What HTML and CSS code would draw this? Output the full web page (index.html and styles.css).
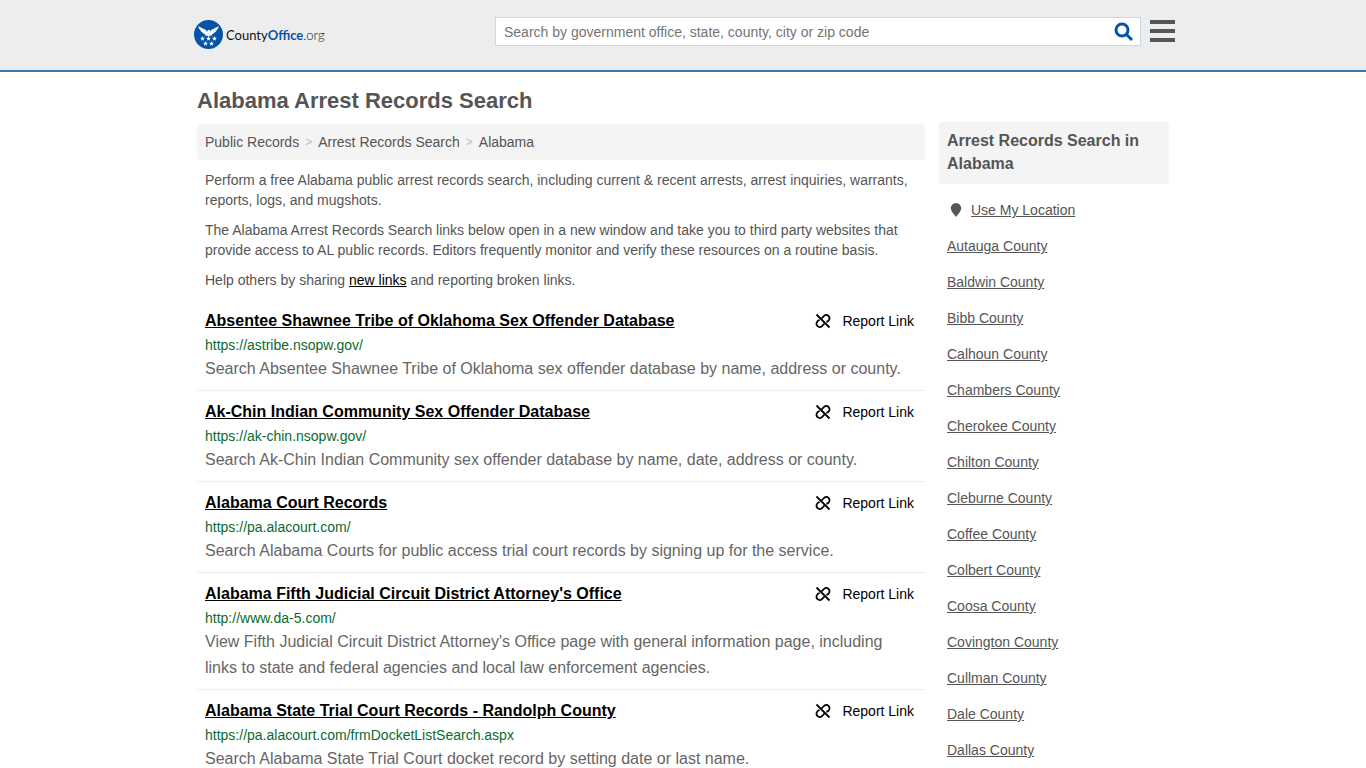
FILE: index.html
```html
<!DOCTYPE html>
<html lang="en">
<head>
    <meta charset="UTF-8">
    <meta name="viewport" content="width=device-width, initial-scale=1.0">
    <title>Alabama Arrest Records Search</title>
    <link rel="stylesheet" href="styles.css">
</head>
<body>
    <!-- shared icons -->
    <svg class="sprite" aria-hidden="true">
        <symbol id="unlink" viewBox="0 0 16 16">
            <g fill="none" stroke="currentColor" stroke-width="1.8">
                <path d="M1.500 1.500l13 13"/>
                <path d="M6.500 5.500l2.300-2.400a3.200 3.200 0 0 1 4.900 4.400c-.6.900-1.400 1.200-2.400 1.300"/>
                <path d="M9.500 10.500l-2.300 2.400a3.200 3.200 0 0 1-4.900-4.400c.6-.9 1.400-1.200 2.400-1.300"/>
            </g>
        </symbol>
        <symbol id="star" viewBox="0 0 10 10">
            <path fill="#fff" d="M5 0l1.300 3.500 3.700.1-2.900 2.300 1 3.600L5 7.400 1.900 9.500l1-3.600L0 3.600l3.700-.1z"/>
        </symbol>
    </svg>

    <header class="header">
        <div class="header-inner">
            <a class="logo" href="#" aria-label="CountyOffice.org">
                <svg class="logo-mark" viewBox="0 0 29 29">
                    <circle cx="14.5" cy="14.5" r="14.5" fill="#0654a6"/>
                    <path fill="#fff" d="M4.500 6c1.200 1.500 4.500 2.200 6.500 3.600 1.100.8 1.600 1.700 2.200 2.400l.3-1.800 1.700-.4 1 .8-.4 1.400c.6-.7 1.100-1.600 2.200-2.400 2-1.400 5.300-2.100 6.500-3.600.2 2-.8 3.200-1.700 3.800-.4 1.500-1.300 2.200-2.300 2.600-.8 1.200-1.800 1.600-3 1.700l1.200 1.500-2.500-.2-1.700 1-1.700-1-2.500.2 1.200-1.500c-1.200-.1-2.200-.5-3-1.700-1-.4-1.900-1.100-2.300-2.600C5.300 9.200 4.300 8 4.500 6z"/>
                    <use href="#star" x="6" y="16" width="5" height="5"/>
                    <use href="#star" x="12" y="16" width="5" height="5"/>
                    <use href="#star" x="18" y="16" width="5" height="5"/>
                    <use href="#star" x="9" y="21" width="5" height="5"/>
                    <use href="#star" x="15" y="21" width="5" height="5"/>
                </svg>
                <span class="logo-text">County<b>Office</b><span class="logo-org">.org</span></span>
            </a>
            <form class="search">
                <input class="search-input" type="text" aria-label="Search" placeholder="Search by government office, state, county, city or zip code">
                <button class="search-button" type="button" aria-label="Search">
                    <svg width="20" height="20" viewBox="0 0 20 20" fill="none" stroke="#0654a6" stroke-width="3">
                        <circle cx="8" cy="8" r="6"/>
                        <path d="M12.500 12.500l5.500 5.500"/>
                    </svg>
                </button>
            </form>
            <button class="menu-button" type="button" aria-label="Menu">
                <span></span>
                <span></span>
                <span></span>
            </button>
        </div>
    </header>

    <div class="container">
        <main class="main">
            <h1>Alabama Arrest Records Search</h1>
            <nav class="breadcrumb">
                <a href="#">Public Records</a>
                <span>&gt;</span>
                <a href="#">Arrest Records Search</a>
                <span>&gt;</span>
                <a href="#">Alabama</a>
            </nav>
            <div class="intro">
                <p>Perform a free Alabama public arrest records search, including current &amp; recent arrests, arrest inquiries, warrants, reports, logs, and mugshots.</p>
                <p>The Alabama Arrest Records Search links below open in a new window and take you to third party websites that provide access to AL public records. Editors frequently monitor and verify these resources on a routine basis.</p>
                <p>Help others by sharing <a href="#">new links</a> and reporting broken links.</p>
            </div>

            <div class="record">
                <div class="record-top">
                    <a class="record-title" href="#">Absentee Shawnee Tribe of Oklahoma Sex Offender Database</a>
                    <a class="report" href="#"><svg><use href="#unlink"/></svg>Report Link</a>
                </div>
                <div class="record-url">https://astribe.nsopw.gov/</div>
                <p class="record-text">Search Absentee Shawnee Tribe of Oklahoma sex offender database by name, address or county.</p>
            </div>
            <div class="record">
                <div class="record-top">
                    <a class="record-title" href="#">Ak-Chin Indian Community Sex Offender Database</a>
                    <a class="report" href="#"><svg><use href="#unlink"/></svg>Report Link</a>
                </div>
                <div class="record-url">https://ak-chin.nsopw.gov/</div>
                <p class="record-text">Search Ak-Chin Indian Community sex offender database by name, date, address or county.</p>
            </div>
            <div class="record">
                <div class="record-top">
                    <a class="record-title" href="#">Alabama Court Records</a>
                    <a class="report" href="#"><svg><use href="#unlink"/></svg>Report Link</a>
                </div>
                <div class="record-url">https://pa.alacourt.com/</div>
                <p class="record-text">Search Alabama Courts for public access trial court records by signing up for the service.</p>
            </div>
            <div class="record">
                <div class="record-top">
                    <a class="record-title" href="#">Alabama Fifth Judicial Circuit District Attorney's Office</a>
                    <a class="report" href="#"><svg><use href="#unlink"/></svg>Report Link</a>
                </div>
                <div class="record-url">http://www.da-5.com/</div>
                <p class="record-text">View Fifth Judicial Circuit District Attorney's Office page with general information page, including links to state and federal agencies and local law enforcement agencies.</p>
            </div>
            <div class="record">
                <div class="record-top">
                    <a class="record-title" href="#">Alabama State Trial Court Records - Randolph County</a>
                    <a class="report" href="#"><svg><use href="#unlink"/></svg>Report Link</a>
                </div>
                <div class="record-url">https://pa.alacourt.com/frmDocketListSearch.aspx</div>
                <p class="record-text">Search Alabama State Trial Court docket record by setting date or last name.</p>
            </div>
        </main>

        <aside class="sidebar">
            <h2>Arrest Records Search in Alabama</h2>
            <ul>
                <li class="location">
                    <svg width="12" height="14" viewBox="0 0 12 14"><path fill="#555" d="M6 0a5.200 5.200 0 0 1 5.200 5.200C11.200 8 8.500 10.500 6 14 3.500 10.500.8 8 .8 5.200A5.200 5.200 0 0 1 6 0z"/></svg>
                    <a href="#">Use My Location</a>
                </li>
                <li><a href="#">Autauga County</a></li>
                <li><a href="#">Baldwin County</a></li>
                <li><a href="#">Bibb County</a></li>
                <li><a href="#">Calhoun County</a></li>
                <li><a href="#">Chambers County</a></li>
                <li><a href="#">Cherokee County</a></li>
                <li><a href="#">Chilton County</a></li>
                <li><a href="#">Cleburne County</a></li>
                <li><a href="#">Coffee County</a></li>
                <li><a href="#">Colbert County</a></li>
                <li><a href="#">Coosa County</a></li>
                <li><a href="#">Covington County</a></li>
                <li><a href="#">Cullman County</a></li>
                <li><a href="#">Dale County</a></li>
                <li><a href="#">Dallas County</a></li>
            </ul>
        </aside>
    </div>
</body>
</html>
```
FILE: styles.css
```css
* {
    box-sizing: border-box;
}
body {
    margin: 0;
    font-family: "Liberation Sans", Arial, sans-serif;
    font-size: 14px;
    line-height: 20px;
    color: #555;
    background-color: #fff;
}
a {
    color: inherit;
}
p {
    margin: 0;
}
.sprite {
    display: none;
}
.header {
    background-color: #ededed;
    border-bottom: 2px solid #337ab7;
}
.header-inner {
    max-width: 984px;
    height: 70px;
    margin: 0 auto;
    padding-left: 3px;
    display: flex;
    align-items: flex-start;
}
.logo {
    display: flex;
    align-items: center;
    gap: 3px;
    margin-top: 20px;
    text-decoration: none;
    color: #111;
}
.logo-mark {
    width: 29px;
    height: 29px;
}
.logo-text {
    font-family: Lato, sans-serif;
    font-size: 13px;
}
.logo-text b {
    color: #0654a6;
}
.logo-org {
    font-weight: 300;
}
.search {
    display: flex;
    width: 646px;
    height: 29px;
    margin: 17px 9px 0 auto;
    background-color: #fff;
    border: 1px solid #c5d9e8;
}
.search-input {
    flex: 1;
    border: none;
    padding: 0 8px;
    font-family: inherit;
    font-size: 14px;
    background: none;
}
.search-input::placeholder {
    color: #757575;
}
.search-button {
    width: 33px;
    padding: 0;
    border: none;
    background: none;
    display: flex;
    align-items: center;
    justify-content: center;
    cursor: pointer;
}
.menu-button {
    width: 25px;
    margin: 20px 0 0;
    padding: 0;
    border: none;
    background: none;
    display: flex;
    flex-direction: column;
    gap: 5px;
    cursor: pointer;
}
.menu-button span {
    width: 25px;
    height: 4px;
    background-color: #555;
}
.container {
    max-width: 972px;
    margin: 0 auto;
    display: flex;
    align-items: flex-start;
    gap: 14px;
}
.main {
    flex: 1;
}
h1 {
    margin: 14px 0 8px;
    font-size: 22px;
    line-height: 30px;
}
.breadcrumb {
    display: flex;
    gap: 6px;
    padding: 8px;
    background-color: #f4f4f4;
    border-radius: 4px;
}
.breadcrumb a {
    text-decoration: none;
}
.breadcrumb span {
    color: #bbb;
    font-size: 12px;
}
.intro {
    padding: 10px 8px;
    display: flex;
    flex-direction: column;
    gap: 10px;
}
.intro a {
    color: #000;
}
.record {
    padding: 9px 8px 8px;
    border-bottom: 1px solid #eee;
}
.record-top {
    display: flex;
    justify-content: space-between;
    line-height: 24px;
    margin-bottom: 2px;
}
.record-title {
    font-size: 16px;
    font-weight: bold;
    color: #000;
}
.report {
    display: flex;
    align-items: center;
    gap: 11px;
    margin-right: 3px;
    color: #000;
    text-decoration: none;
}
.report svg {
    width: 16px;
    height: 16px;
}
.record-url {
    margin-bottom: 1px;
    color: #0a6b2d;
}
.record-text {
    font-size: 16px;
    line-height: 26px;
    color: #666;
}
.sidebar {
    width: 230px;
    margin-top: 50px;
}
h2 {
    margin: 0 0 8px;
    padding: 7px 8px 9px;
    font-size: 16px;
    line-height: 23px;
    background-color: #f4f4f4;
    border-radius: 4px;
}
.sidebar ul {
    list-style: none;
    margin: 0;
    padding: 0 8px;
}
.sidebar li {
    padding: 8px 0;
}
.location {
    display: flex;
    align-items: center;
    gap: 9px;
}
.location svg {
    margin-left: 3px;
}
```
